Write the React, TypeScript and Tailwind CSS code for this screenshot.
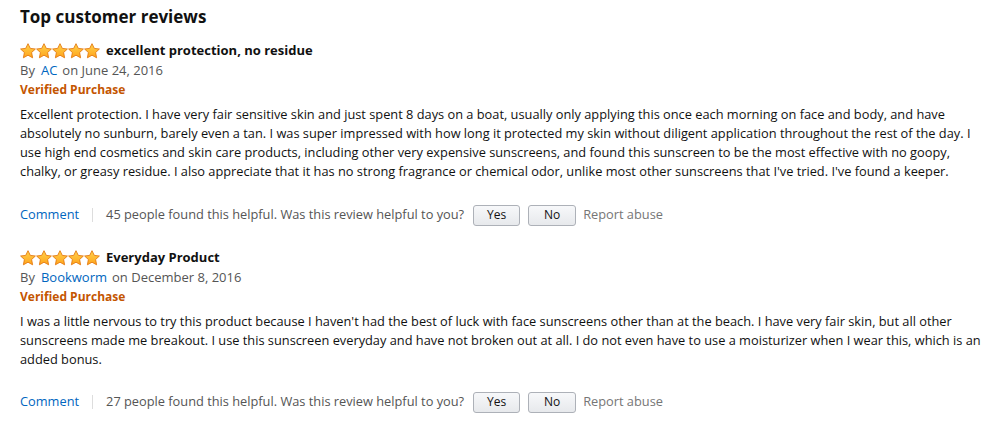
import React from 'react';

type Review = {
  title: string;
  author: string;
  date: string;
  body: string;
  helpful: number;
};

const reviews: Review[] = [
  {
    title: 'excellent protection, no residue',
    author: 'AC',
    date: 'June 24, 2016',
    body:
      "Excellent protection. I have very fair sensitive skin and just spent 8 days on a boat, usually only applying this once each morning on face and body, and have absolutely no sunburn, barely even a tan. I was super impressed with how long it protected my skin without diligent application throughout the rest of the day. I use high end cosmetics and skin care products, including other very expensive sunscreens, and found this sunscreen to be the most effective with no goopy, chalky, or greasy residue. I also appreciate that it has no strong fragrance or chemical odor, unlike most other sunscreens that I've tried. I've found a keeper.",
    helpful: 45,
  },
  {
    title: 'Everyday Product',
    author: 'Bookworm',
    date: 'December 8, 2016',
    body:
      "I was a little nervous to try this product because I haven't had the best of luck with face sunscreens other than at the beach. I have very fair skin, but all other sunscreens made me breakout. I use this sunscreen everyday and have not broken out at all. I do not even have to use a moisturizer when I wear this, which is an added bonus.",
    helpful: 27,
  },
];

function Star() {
  return (
    <svg width="16" height="16" viewBox="0 0 16 16">
      <defs>
        <linearGradient id="starFill" x1="0" y1="0" x2="0" y2="1">
          <stop offset="0" stopColor="#ffd24c" />
          <stop offset="1" stopColor="#ffa41c" />
        </linearGradient>
      </defs>
      <path
        d="M8 0.7 L10.3 5.4 L15.4 6 L11.6 9.5 L12.6 14.8 L8 12.2 L3.4 14.8 L4.4 9.5 L0.6 6 L5.7 5.4 Z"
        fill="url(#starFill)"
        stroke="#e47911"
        strokeWidth="0.9"
        strokeLinejoin="round"
      />
    </svg>
  );
}

function ReviewItem({ review, last }: { review: Review; last?: boolean }) {
  return (
    <div className={last ? '' : 'mb-[22px]'}>
      <div className="flex items-center h-5">
        <div className="flex">
          {[0, 1, 2, 3, 4].map((i) => (
            <Star key={i} />
          ))}
        </div>
        <span className="ml-[6px] text-[13px] font-bold text-[#111]">{review.title}</span>
      </div>
      <div className="h-[19px] flex items-center text-[13px] text-[#555]">
        By<a className="ml-[6px] mr-[5px] text-[#0066c0]">{review.author}</a>on {review.date}
      </div>
      <div className="h-[19px] flex items-center text-[12px] font-bold text-[#c45500]">
        Verified Purchase
      </div>
      <p className="mt-[6px] w-[965px] text-[12.8px] leading-[19px] text-[#111]">{review.body}</p>
      <div className={`${last ? 'mt-[22px]' : 'mt-[23px]'} flex items-center h-[22px] text-[12.8px]`}>
        <a className="text-[#0066c0]">Comment</a>
        <span className="mx-[13px] h-[14px] w-px bg-[#ddd]" />
        <span className="text-[#555]">
          {review.helpful} people found this helpful. Was this review helpful to you?
        </span>
        <button className="ml-[9px] w-[47px] h-[21px] rounded-[3px] border border-[#adb1b8] bg-gradient-to-b from-[#f7f8fa] to-[#e7e9ec] text-[12px] text-[#111]">
          Yes
        </button>
        <button className="ml-[8px] w-[48px] h-[21px] rounded-[3px] border border-[#adb1b8] bg-gradient-to-b from-[#f7f8fa] to-[#e7e9ec] text-[12px] text-[#111]">
          No
        </button>
        <a className="ml-[7px] text-[#767676]">Report abuse</a>
      </div>
    </div>
  );
}

export default function App() {
  return (
    <div
      className="w-[1001px] h-[423px] bg-white pl-[20px] pt-[5px] overflow-hidden"
      style={{ fontFamily: '"Open Sans", "Noto Sans", Arial, sans-serif' }}
    >
      <h2 className="text-[17px] font-bold text-[#111] leading-[24px] mb-[12px]">Top customer reviews</h2>
      {reviews.map((r, i) => (
        <ReviewItem key={r.author} review={r} last={i === reviews.length - 1} />
      ))}
    </div>
  );
}
